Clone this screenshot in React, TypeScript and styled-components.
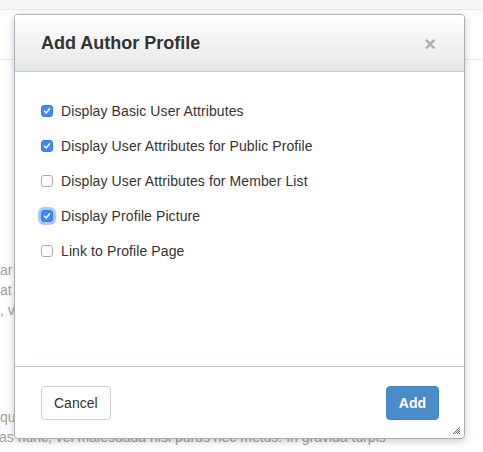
import React from 'react'
import styled, { createGlobalStyle } from 'styled-components'

const GlobalStyle = createGlobalStyle`
  html, body {
    margin: 0;
    padding: 0;
    background: #fff;
  }
  body {
    font-family: "Liberation Sans", Arial, Helvetica, sans-serif;
    -webkit-font-smoothing: antialiased;
  }
`

const options = [
  { label: 'Display Basic User Attributes', checked: true },
  { label: 'Display User Attributes for Public Profile', checked: true },
  { label: 'Display User Attributes for Member List', checked: false },
  { label: 'Display Profile Picture', checked: true, focused: true },
  { label: 'Link to Profile Page', checked: false },
]

export default function App() {
  return (
    <>
      <GlobalStyle />
      <Page>
        <TopStrip />
        <PageHeader />
        <PageContent>
          <Paragraph>
            <Line>ar Pellentesque habitant morbi tristique senectus</Line>
            <Line>at sed netus et malesuada fames ac turpis egestas</Line>
            <Line>, vel aliquam erat volutpat nunc eget lorem dolor</Line>
          </Paragraph>
          <Paragraph $gap={87}>
            <Line>qu Aenean imperdiet etiam ultricies nisi vel augue</Line>
            <Line $shift={-1}>as nunc, vel malesuada nisi purus nec metus. In gravida turpis</Line>
          </Paragraph>
        </PageContent>

        <Modal>
          <ModalHeader>
            <Title>Add Author Profile</Title>
            <CloseButton aria-label="Close">×</CloseButton>
          </ModalHeader>

          <ModalBody>
            {options.map((opt) => (
              <OptionRow key={opt.label}>
                <Check $checked={opt.checked} $focused={opt.focused}>
                  {opt.checked && (
                    <svg width="8" height="8" viewBox="0 0 8 8">
                      <path d="M1.4 4.2 L3.2 6 L6.6 1.8" fill="none" stroke="#fff" strokeWidth="1.5" strokeLinecap="round" strokeLinejoin="round" />
                    </svg>
                  )}
                </Check>
                <OptionLabel>{opt.label}</OptionLabel>
              </OptionRow>
            ))}
          </ModalBody>

          <ModalFooter>
            <Button>Cancel</Button>
            <Button $primary>Add</Button>
          </ModalFooter>

          <ResizeHandle width="7" height="7" viewBox="0 0 7 7">
            <path d="M0 7 L7 0 M2 7 L7 2 M4 7 L7 4 M6 7 L7 6" stroke="#444" strokeWidth="0.8" />
          </ResizeHandle>
        </Modal>
      </Page>
    </>
  )
}

const Page = styled.div`
  position: relative;
  width: 483px;
  height: 452px;
  overflow: hidden;
  background: #fff;
`

const TopStrip = styled.div`
  height: 9px;
  background: #f8f8f8;
  border-bottom: 1px solid #e8e8e8;
`

const PageHeader = styled.div`
  height: 49px;
  border-bottom: 1px solid #ececec;
`

const PageContent = styled.div`
  padding-top: 200px;
`

const Paragraph = styled.p<{ $gap?: number }>`
  margin: ${(p) => p.$gap ?? 0}px 0 0;
  font-size: 14px;
  line-height: 20px;
  color: #a0a0a0;
`

const Line = styled.span<{ $shift?: number }>`
  display: block;
  white-space: nowrap;
  margin-left: ${(p) => p.$shift ?? 0}px;
`

const Modal = styled.div`
  position: absolute;
  left: 14px;
  top: 14px;
  width: 451px;
  height: 425px;
  box-sizing: border-box;
  display: flex;
  flex-direction: column;
  background: #fff;
  border: 1px solid #a7b0b9;
  border-radius: 4px;
  box-shadow: 0 2px 8px rgba(0, 0, 0, 0.22);
  overflow: hidden;
`

const ModalHeader = styled.div`
  height: 56px;
  flex: none;
  display: flex;
  align-items: center;
  justify-content: space-between;
  padding: 0 28px 0 26px;
  background: linear-gradient(to bottom, #ffffff 0%, #e7e7e7 100%);
  border-bottom: 1px solid #c3c9cf;
`

const Title = styled.h3`
  margin: 0;
  font-size: 18px;
  font-weight: bold;
  color: #333;
`

const CloseButton = styled.span`
  font-size: 20px;
  font-weight: bold;
  line-height: 1;
  color: #adadad;
  margin-top: 1px;
  cursor: pointer;
`

const ModalBody = styled.div`
  flex: 1;
  display: flex;
  flex-direction: column;
  gap: 15px;
  padding: 29px 26px 0;
`

const OptionRow = styled.label`
  display: flex;
  align-items: center;
  gap: 8px;
  height: 20px;
  cursor: pointer;
`

const Check = styled.span<{ $checked?: boolean; $focused?: boolean }>`
  box-sizing: border-box;
  width: 12px;
  height: 12px;
  display: flex;
  align-items: center;
  justify-content: center;
  border-radius: 3px;
  background: ${(p) => (p.$checked ? '#3b8bf2' : '#fff')};
  border: 1px solid ${(p) => (p.$checked ? '#2f7fe6' : '#aeaeae')};
  box-shadow: ${(p) => (p.$focused ? '0 0 0 3px rgba(92, 160, 245, 0.55)' : 'none')};
`

const OptionLabel = styled.span`
  font-size: 14px;
  letter-spacing: 0.1px;
  color: #333;
`

const ModalFooter = styled.div`
  flex: none;
  height: 72px;
  box-sizing: border-box;
  display: flex;
  align-items: center;
  justify-content: space-between;
  padding: 0 25px 0 26px;
  border-top: 1px solid #c3c9cf;
`

const Button = styled.button<{ $primary?: boolean }>`
  height: 34px;
  padding: 0 12px;
  font-family: "Liberation Sans", Arial, Helvetica, sans-serif;
  font-size: 14px;
  font-weight: ${(p) => (p.$primary ? 'bold' : 'normal')};
  color: ${(p) => (p.$primary ? '#fff' : '#333')};
  background: ${(p) => (p.$primary ? '#4a8bc9' : '#fff')};
  border: 1px solid ${(p) => (p.$primary ? '#4381bf' : '#cfcfcf')};
  border-radius: 4px;
  cursor: pointer;
`

const ResizeHandle = styled.svg`
  position: absolute;
  right: 4px;
  bottom: 4px;
`
